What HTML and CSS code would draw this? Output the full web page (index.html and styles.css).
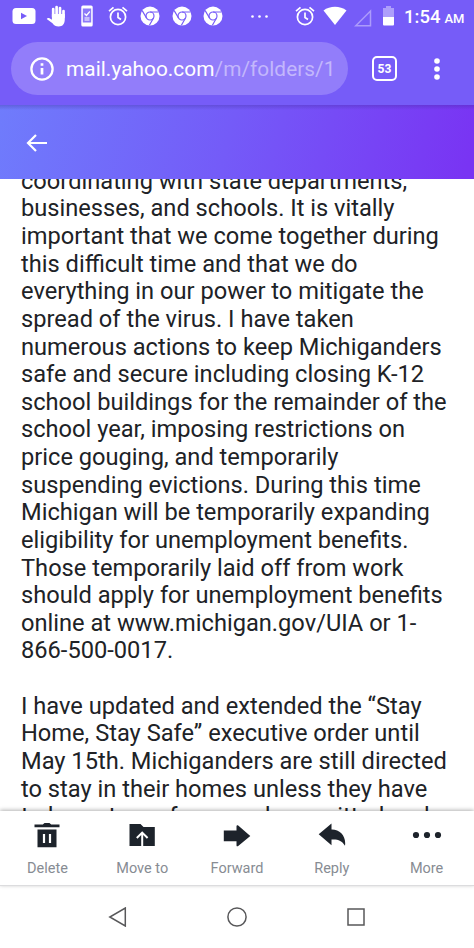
FILE: index.html
```html
<!DOCTYPE html>
<html lang="en">
<head>
<meta charset="utf-8">
<title>Mail</title>
<link rel="stylesheet" href="styles.css">
</head>
<body>
<svg class="defs" width="0" height="0">
  <symbol id="alarm" viewBox="0 0 20 20"><g fill="none" stroke="currentColor" stroke-width="1.7"><circle cx="10" cy="11" r="7.6"/><path d="M10 6.5v5l3 2M1 5.2 5.5 1.3M19 5.2l-4.5-3.9"/></g></symbol>
  <symbol id="chrome" viewBox="0 0 20 20"><circle cx="10" cy="10" r="9.5" fill="currentColor"/><g fill="none" stroke="#765cf8" stroke-width="1.2"><circle cx="10" cy="10" r="4"/><path d="M10 6h8.5M6.5 12 2.2 4.6M13.5 12 9.4 19.2"/></g></symbol>
</svg>
<div class="screen">
  <header class="status">
    <div class="notices">
      <svg width="24" height="18" viewBox="0 0 24 18"><rect x=".5" y="1" width="23" height="16" rx="3.5" fill="#fff"/><path d="M9 5.8v6.4l6-3.2z" fill="#765cf8"/></svg>
      <svg class="hand" width="20" height="22" viewBox="0 0 20 22"><path d="M7.2 12V4M10.6 11V2M14 11V3M17.5 12V6" stroke="#fff" stroke-width="2.7" stroke-linecap="round"/><path d="M5.9 9h12.9v5c0 5-2 7.4-6.1 7.4-3 0-4.6-1.1-6.2-3.2L.7 14.1c.9-1.5 2.5-1.3 5.2.7z" fill="#fff"/></svg>
      <svg class="phone" width="12" height="22" viewBox="0 0 12 22"><rect x=".3" y=".5" width="11.4" height="21" rx="1.6" fill="#fff"/><path d="M1.8 3.5h8.4v14H1.8z" fill="#8c79f9"/><path d="m3.5 8.5 2 2 3.3-4M3.5 13h5M3.5 15h5" fill="none" stroke="#fff" stroke-width="1.2"/></svg>
      <svg class="alarm" width="20" height="20"><use href="#alarm"/></svg>
      <svg class="chrome" width="20" height="20"><use href="#chrome"/></svg>
      <svg class="chrome" width="20" height="20"><use href="#chrome"/></svg>
      <svg class="chrome" width="20" height="20"><use href="#chrome"/></svg>
    </div>
    <svg class="overflow" width="17" height="3" viewBox="0 0 17 3" fill="#fff"><circle cx="1.5" cy="1.5" r="1.3"/><circle cx="8.5" cy="1.5" r="1.3"/><circle cx="15.5" cy="1.5" r="1.3"/></svg>
    <svg class="clock" width="20" height="20"><use href="#alarm"/></svg>
    <svg class="wifi" width="24" height="20" viewBox="0 0 24 20"><path d="M.5 4.4C7-.5 17-.5 23.5 4.4L12 19z" fill="#fff"/></svg>
    <svg class="signal" width="18" height="18" viewBox="0 0 18 18"><path d="M16.5 2v14.7H1.8z" fill="none" stroke="#ac9bfb" stroke-width="1.5"/></svg>
    <svg class="battery" width="11" height="20" viewBox="0 0 11 20"><path d="M3 0h5v2h3v10H0V2h3z" fill="#ad9efb"/><path d="M0 11h11v7.5a1 1 0 0 1-1 1H1a1 1 0 0 1-1-1z" fill="#fff"/></svg>
    <div class="time"><span>1:54</span><small>AM</small></div>
  </header>
  <div class="browser">
    <div class="address">
      <svg width="24" height="24" viewBox="0 0 24 24"><circle cx="12" cy="12" r="10.6" fill="none" stroke="#fff" stroke-width="2.3"/><path d="M12 11v6.5M12 6.2v2.6" stroke="#fff" stroke-width="2.7"/></svg>
      <span class="url">mail.yahoo.com<span>/m/folders/1</span></span>
    </div>
    <span class="tabs">53</span>
    <svg class="menu" width="6" height="22" viewBox="0 0 6 22" fill="#fff"><circle cx="3" cy="3" r="2.8"/><circle cx="3" cy="11" r="2.8"/><circle cx="3" cy="19" r="2.8"/></svg>
  </div>
  <nav class="mailbar"><svg width="22" height="18" viewBox="0 0 22 18"><path d="M21 9H2M10 1 2 9l8 8" fill="none" stroke="#fff" stroke-width="2.2"/></svg></nav>
  <main class="message">
    <p>coordinating with state departments,<br>businesses, and schools. It is vitally<br>important that we come together during<br>this difficult time and that we do<br>everything in our power to mitigate the<br>spread of the virus. I have taken<br>numerous actions to keep Michiganders<br>safe and secure including closing K-12<br>school buildings for the remainder of the<br>school year, imposing restrictions on<br>price gouging, and temporarily<br>suspending evictions. During this time<br>Michigan will be temporarily expanding<br>eligibility for unemployment benefits.<br>Those temporarily laid off from work<br>should apply for unemployment benefits<br>online at www.michigan.gov/UIA or 1-<br>866-500-0017.</p>
    <p>I have updated and extended the “Stay<br>Home, Stay Safe” executive order until<br>May 15th. Michiganders are still directed<br>to stay in their homes unless they have<br>to leave to perform work permitted under</p>
  </main>
  <nav class="actions">
    <div><svg width="28" height="28" viewBox="0 0 28 28"><path d="M1.5 3.5h8.3l1.7-1.5h5l1.7 1.5h8.3v2.8h-25zM4.5 8.5h19v17.8h-19z" fill="#1d232b"/><path d="M11 13v9M17 13v9" stroke="#fff" stroke-width="2.2"/></svg><span>Delete</span></div>
    <div><svg width="28" height="28" viewBox="0 0 28 28"><path d="M1.5 3h11l3 3h11.3v19H1.5z" fill="#1d232b"/><path d="M14.2 25V12.5M8.8 17l5.4-5.4 5.4 5.4" fill="none" stroke="#fff" stroke-width="2"/></svg><span>Move to</span></div>
    <div><svg width="28" height="28" viewBox="0 0 28 28"><path d="M.8 9.5h12.7V5.2c0-1 1-1.2 1.7-.6L27.3 15 15.2 25c-.7.6-1.7.4-1.7-.6v-4.2H.8z" fill="#1d232b"/></svg><span>Forward</span></div>
    <div><svg width="28" height="28" viewBox="0 0 28 28"><path d="M.7 13.2 13.5 2.6v5.8C22 8.2 28.4 15 27 24.8c-3.2-5.2-7-6.6-13.5-6.2v5.6z" fill="#1d232b"/></svg><span>Reply</span></div>
    <div><svg width="30" height="28" viewBox="0 0 30 28" fill="#1d232b"><circle cx="4" cy="14" r="3.1"/><circle cx="15" cy="14" r="3.1"/><circle cx="26" cy="14" r="3.1"/></svg><span>More</span></div>
  </nav>
  <footer class="system">
    <svg width="20" height="20" viewBox="0 0 20 20"><path d="M17.3 1v18L1.8 10z"/></svg>
    <svg width="20" height="20" viewBox="0 0 20 20"><circle cx="10" cy="10" r="9.1"/></svg>
    <svg width="20" height="20" viewBox="0 0 20 20"><path d="M2 2h16v16H2z"/></svg>
  </footer>
</div>
</body>
</html>
```
FILE: styles.css
```css
* { box-sizing: border-box; }
body { margin: 0; font-family: Roboto, sans-serif; background: #fff; }
svg { display: block; flex: none; }
.defs { position: absolute; }
.screen { width: 474px; height: 948px; display: flex; flex-direction: column; overflow: hidden; }
.status { height: 34px; flex: none; display: flex; align-items: center; padding: 0 0 2px 12px; background: #765cf8; color: #fff; }
.notices { display: flex; align-items: center; width: 239px; }
.hand { margin-left: 10px; }
.phone { margin-left: 15px; }
.alarm { margin-left: 15px; }
.chrome { margin-left: 12px; }
.chrome ~ .chrome { margin-left: 11.5px; }
.clock { margin-left: 27px; }
.wifi { margin-left: 8px; }
.signal { margin: 3px 0 0 7px; }
.battery { margin-left: 11px; }
.time { display: flex; align-items: baseline; gap: 4px; margin-left: 10px; font-size: 18.5px; font-weight: 500; white-space: nowrap; padding-top: 2px; }
.time small { font-size: 13px; }
.browser { height: 71px; flex: none; display: flex; align-items: center; padding: 0 0 2px 11px; background: #765cf8; color: #fff; }
.address { width: 337px; height: 53px; border-radius: 27px; background: #927dfa; display: flex; align-items: center; padding-left: 19px; }
.url { margin-left: 12px; font-size: 20.8px; letter-spacing: .05px; white-space: nowrap; }
.url span { color: #c3b7fc; }
.tabs { width: 25px; height: 25px; margin-left: 24px; border: 2.5px solid #fff; border-radius: 5px; font-size: 12px; font-weight: 700; display: flex; align-items: center; justify-content: center; }
.menu { margin-left: 37px; }
.mailbar { height: 74px; flex: none; padding: 29px 0 0 26px; background: linear-gradient(to bottom, rgba(60,40,150,.3), transparent 5px), linear-gradient(105deg, #6f7cfc 0%, #745bf8 48%, #7934f3 98%); }
.message { flex: 1; min-height: 0; overflow: hidden; padding-left: 21px; color: #202226; font-size: 23.65px; line-height: 27.62px; white-space: nowrap; }
.message p { margin: 0 0 27.62px; }
.message p:first-child { margin-top: -11.2px; }
.actions { height: 75px; flex: none; display: grid; grid-template-columns: repeat(5, 1fr); border-bottom: 1px solid #dcdcde; box-shadow: 0 -1px 4px rgba(0,0,0,.3); background: #fff; position: relative; }
.actions div { display: flex; flex-direction: column; align-items: center; padding-top: 10px; }
.actions span { margin-top: 11px; font-size: 14.5px; line-height: 18px; color: #878c93; }
.system { height: 62px; flex: none; display: flex; justify-content: center; gap: 99px; padding-top: 21px; fill: none; stroke: #58585a; stroke-width: 1.5; }
```
